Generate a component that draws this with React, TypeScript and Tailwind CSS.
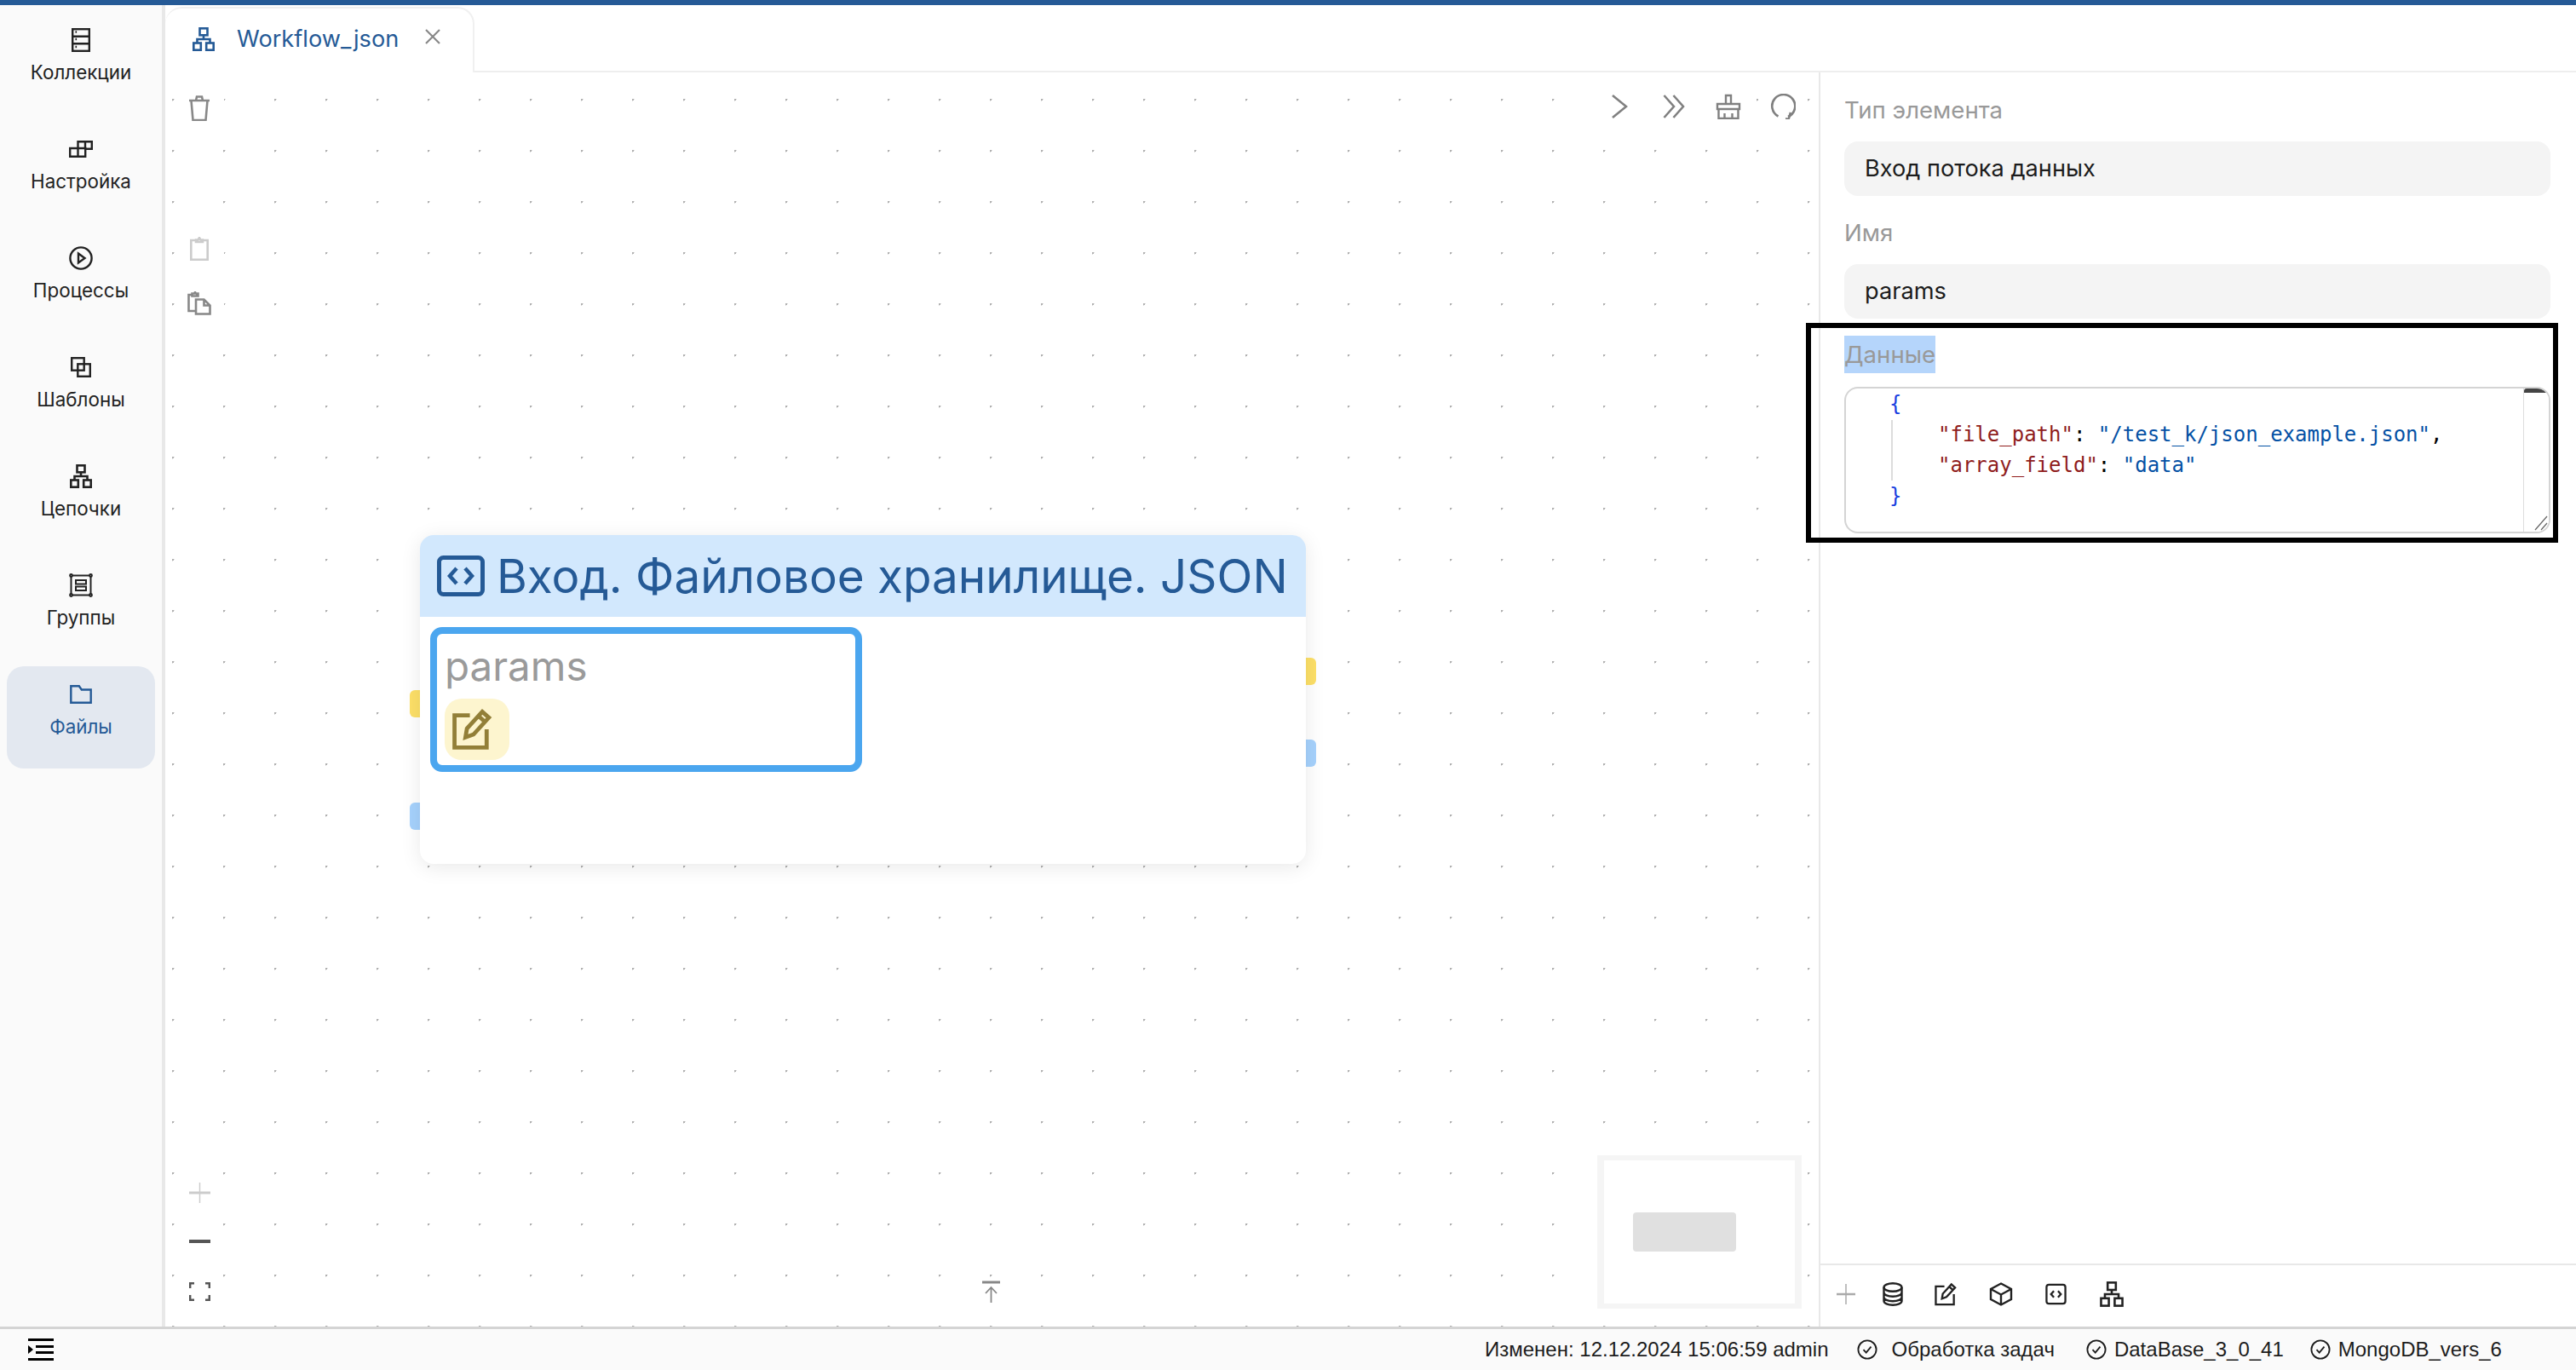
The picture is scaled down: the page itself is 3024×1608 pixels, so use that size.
import type { ReactNode } from "react";

type IconProps = { w: number; h: number; vb: string; sw?: number; className?: string; children: ReactNode };

function Icon({ w, h, vb, sw = 2.4, className = "", children }: IconProps) {
  return (
    <svg width={w} height={h} viewBox={vb} fill="none" stroke="currentColor" strokeWidth={sw} className={`shrink-0 ${className}`}>
      {children}
    </svg>
  );
}

const Hierarchy = ({ w = 26, h = 28, sw = 2.6 }: { w?: number; h?: number; sw?: number }) => (
  <Icon w={w} h={h} vb="0 0 26 28" sw={sw}>
    <rect x="8.5" y="1.3" width="9" height="8" />
    <rect x="1.3" y="18.5" width="8.5" height="8.2" />
    <rect x="16.2" y="18.5" width="8.5" height="8.2" />
    <path d="M13 9.5v4.5M5.5 18.5v-4.5h15v4.5" />
  </Icon>
);

const EditIcon = ({ w, h, sw = 2.6 }: { w: number; h: number; sw?: number }) => (
  <Icon w={w} h={h} vb="0 0 28 28" sw={sw}>
    <path d="M12 4.5H1.5v22h22V14" />
    <path d="M9 19.5l1-6L20.5 2l4.5 4L14.5 17.5z" />
    <path d="M18 5l4.5 4" />
  </Icon>
);

const CodeIcon = ({ w, h, sw = 2.6 }: { w: number; h: number; sw?: number }) => (
  <Icon w={w} h={h} vb="0 0 26 26" sw={sw}>
    <rect x="1.5" y="1.5" width="23" height="23" rx="3" />
    <path d="M10.5 9l-3.5 4 3.5 4M15.5 9l3.5 4-3.5 4" />
  </Icon>
);

const CheckCircle = () => (
  <Icon w={24} h={24} vb="0 0 24 24" sw={1.8}>
    <circle cx="12" cy="12" r="10.6" />
    <path d="M7.5 12.2l3.2 3.4 5.8-7" />
  </Icon>
);

const navItems: { label: string; active?: boolean; icon: ReactNode }[] = [
  {
    label: "Коллекции",
    icon: (
      <Icon w={22} h={28} vb="0 0 22 28">
        <rect x="1.2" y="1.2" width="19.6" height="25.6" />
        <path d="M1.2 9.8h19.6M1.2 18.2h19.6" />
        <path d="M4.5 4.5h1.6M4.5 13h1.6M4.5 22h1.6" />
      </Icon>
    ),
  },
  {
    label: "Настройка",
    icon: (
      <Icon w={28} h={20} vb="0 0 28 20">
        <path d="M1.2 9h18v9.8h-18zM10.5 9v9.8" />
        <path d="M10.5 9V1.2h16.3v8.6h-7.6M19 1.2v8" />
      </Icon>
    ),
  },
  {
    label: "Процессы",
    icon: (
      <Icon w={28} h={28} vb="0 0 28 28">
        <circle cx="14" cy="14" r="12.6" />
        <path d="M11 8.5l7.5 5.5-7.5 5.5z" />
      </Icon>
    ),
  },
  {
    label: "Шаблоны",
    icon: (
      <Icon w={24} h={24} vb="0 0 24 24">
        <rect x="1.2" y="1.2" width="14.5" height="14.5" />
        <rect x="8.3" y="8.3" width="14.5" height="14.5" />
      </Icon>
    ),
  },
  { label: "Цепочки", icon: <Hierarchy /> },
  {
    label: "Группы",
    icon: (
      <Icon w={28} h={28} vb="0 0 28 28" sw={2}>
        <rect x="2.5" y="2.5" width="23" height="23" />
        <rect x="8" y="8" width="12" height="4.5" />
        <rect x="8" y="15.5" width="12" height="4.5" />
        <circle cx="2.5" cy="2.5" r="1.4" fill="#fafafa" />
        <circle cx="25.5" cy="2.5" r="1.4" fill="#fafafa" />
        <circle cx="2.5" cy="25.5" r="1.4" fill="#fafafa" />
        <circle cx="25.5" cy="25.5" r="1.4" fill="#fafafa" />
      </Icon>
    ),
  },
  {
    label: "Файлы",
    active: true,
    icon: (
      <Icon w={26} h={22} vb="0 0 26 22">
        <path d="M1.3 20.7V1.3h9.5l3 4.2h10.9v15.2z" />
      </Icon>
    ),
  },
];

function Sidebar() {
  return (
    <aside className="w-[194px] shrink-0 bg-[#fafafa] border-r-4 border-[#e8e8e8] pt-2 pl-2 flex flex-col gap-2">
      {navItems.map((item) => (
        <div
          key={item.label}
          className={`w-[174px] h-[120px] rounded-[20px] flex flex-col items-center ${item.active ? "bg-[#e3e8f0] text-[#255a96]" : "text-[#222222]"}`}
        >
          <div className="h-[28px] mt-[19px] flex items-center justify-center">{item.icon}</div>
          <span className="mt-[10px] text-[22.4px] leading-[28px]">{item.label}</span>
        </div>
      ))}
    </aside>
  );
}

function TabBar() {
  return (
    <div className="h-[79px] shrink-0 flex">
      <div className="w-[363px] mt-[2px] rounded-tr-[20px] rounded-tl-[20px] border-r-2 border-t-2 border-[#f0f0f0] flex items-center pb-[2px]">
        <div className="ml-[32px] text-[#255a96] mb-[2px]">
          <Hierarchy />
        </div>
        <span className="ml-[26px] text-[27.2px] text-[#255a96]">Workflow_json</span>
        <svg width="18" height="18" viewBox="0 0 18 18" stroke="#888888" strokeWidth="2.2" className="ml-[31px] mb-[8px]">
          <path d="M1 1l16 16M17 1L1 17" />
        </svg>
      </div>
      <div className="flex-1 border-b-2 border-[#eeeeee]" />
    </div>
  );
}

function ToolButton({ children, className = "" }: { children: ReactNode; className?: string }) {
  return <div className={`w-[58px] h-[58px] bg-white flex items-center justify-center ${className}`}>{children}</div>;
}

function GraphNode() {
  return (
    <div className="absolute left-[291px] top-[543px] w-[1040px] h-[386px]">
      <div className="absolute left-[-12px] top-[182px] w-[12px] h-[32px] rounded-l-[6px] bg-[#fde068]" />
      <div className="absolute left-[-12px] top-[314px] w-[12px] h-[32px] rounded-l-[6px] bg-[#a6d2fd]" />
      <div className="absolute right-[-12px] top-[144px] w-[12px] h-[32px] rounded-r-[6px] bg-[#fde068]" />
      <div className="absolute right-[-12px] top-[240px] w-[12px] h-[32px] rounded-r-[6px] bg-[#a6d2fd]" />
      <div className="relative h-full rounded-[16px] bg-white shadow-[0_4px_24px_rgba(0,0,0,0.09)] overflow-hidden">
        <div className="h-[96px] bg-[#d2e8fd] flex items-center pl-[20px] text-[#255a96]">
          <svg width="56" height="48" viewBox="0 0 56 48" fill="none" stroke="currentColor" strokeWidth="5" className="shrink-0">
            <rect x="2.5" y="2.5" width="51" height="43" rx="5" />
            <path d="M23 15l-8 9 8 9M33 15l8 9-8 9" strokeWidth="4.5" />
          </svg>
          <span className="ml-[14px] text-[54.8px] leading-[64px] whitespace-nowrap">Вход. Файловое хранилище. JSON</span>
        </div>
        <div className="mt-[12px] ml-[12px] w-[507px] h-[170px] rounded-[14px] border-[8px] border-[#4ba6ef] pl-[9px] flex flex-col">
          <span className="mt-[8px] text-[47.5px] leading-[60px] text-[#9a9a9a]">params</span>
          <div className="mt-[8px] w-[76px] h-[72px] rounded-[20px] bg-[#fdf5cf] text-[#927f38] flex items-center pl-[8px]">
            <EditIcon w={50} h={48} sw={2.8} />
          </div>
        </div>
      </div>
    </div>
  );
}

function Canvas() {
  return (
    <div className="relative flex-1 ml-2 bg-[radial-gradient(circle_at_0_0,#b0b0b0_2.2px,transparent_2.8px)] bg-[length:60px_60px] bg-[position:0_31px]">
      {/* левая панель */}
      <div className="absolute left-[3px] top-[13px] flex flex-col text-[#888888]">
        <ToolButton>
          <Icon w={26} h={30} vb="0 0 26 30" sw={2.6}>
            <path d="M1 6h24M3.5 6l2 23h15l2-23M9 6l1-4.5h6L17 6" />
          </Icon>
        </ToolButton>
        <ToolButton className="mt-[107px] text-[#cccccc]">
          <Icon w={22} h={28} vb="0 0 22 28" sw={2.6}>
            <path d="M7 4H1.3v22.7h19.4V4H15" />
            <path d="M7 6V3.5h2.5L11 1l1.5 2.5H15V6z" />
          </Icon>
        </ToolButton>
        <ToolButton className="mt-[6px]">
          <Icon w={28} h={28} vb="0 0 28 28" sw={2.6}>
            <path d="M9 23H1.5V4h4M10 4h3" />
            <path d="M5.5 5.5V2.5H8L9 1l1 1.5h2.5v3z" />
            <path d="M10 9.5h9.5l7 7v10H10zM19.5 9.5v7h7" />
          </Icon>
        </ToolButton>
      </div>

      {/* запуск */}
      <div className="absolute right-[13px] top-[11px] flex gap-[6px] text-[#808080]">
        <ToolButton>
          <Icon w={20} h={28} vb="0 0 20 28" sw={2.6}>
            <path d="M2 1l16 13L2 27" />
          </Icon>
        </ToolButton>
        <ToolButton>
          <Icon w={26} h={28} vb="0 0 26 28" sw={2.6}>
            <path d="M1.5 1l11.5 13L1.5 27M12.5 1L24 14 12.5 27" />
          </Icon>
        </ToolButton>
        <ToolButton>
          <Icon w={30} h={30} vb="0 0 30 30" sw={2.4}>
            <path d="M12 12V2h6v10M2 12h26v6H2zM3.5 18v11h23V18M10.5 29v-6M19.5 29v-6" />
          </Icon>
        </ToolButton>
        <ToolButton>
          <Icon w={30} h={30} vb="0 0 30 30" sw={2.6}>
            <path d="M9.5 26.5A13.5 13.5 0 1 1 21 27" />
            <path d="M18 29.5l3.8-.2L24 22" />
          </Icon>
        </ToolButton>
      </div>

      <GraphNode />

      {/* масштаб */}
      <div className="absolute left-[20px] top-[1303px] flex flex-col items-center w-[25px]">
        <svg width="25" height="24" viewBox="0 0 25 24" stroke="#cccccc">
          <path d="M12.5 0v24" strokeWidth="1.5" />
          <path d="M0 12h25" strokeWidth="3" />
        </svg>
        <div className="mt-[43px] w-[25px] h-[4px] bg-[#555555]" />
        <svg width="25" height="22" viewBox="0 0 25 22" fill="none" stroke="#555555" strokeWidth="2.4" className="mt-[46px]">
          <path d="M1.2 7V1.2H6M19 1.2h4.8V7M1.2 15v5.8H6M19 20.8h4.8V15" />
        </svg>
      </div>

      <svg width="21" height="26" viewBox="0 0 21 26" fill="none" stroke="#888888" className="absolute left-[951px] top-[1418px]">
        <path d="M0 2h21" strokeWidth="3" />
        <path d="M10.5 26V8M4 15l6.5-7L17 15" strokeWidth="1.8" />
      </svg>

      {/* миникарта */}
      <div className="absolute left-[1673px] top-[1271px] w-[240px] h-[180px] border-x-[8px] border-y-[6px] border-[#f5f5f5] bg-white">
        <div className="ml-[34px] mt-[61px] w-[121px] h-[46px] rounded-[4px] bg-[#e0e0e0]" />
      </div>
    </div>
  );
}

function Field({ value }: { value: string }) {
  return (
    <div className="mt-[17px] h-[64px] rounded-[16px] bg-[#f4f4f4] flex items-center pl-[24px] pt-[1px] text-[27.2px] text-[#1c1c1c]">
      {value}
    </div>
  );
}

function JsonEditor() {
  return (
    <div className="relative mt-[16px] h-[172px] rounded-[16px] border-2 border-[#d4d4d4] bg-white overflow-hidden font-['DejaVu_Sans_Mono',monospace] text-[24px] leading-[36px] whitespace-pre">
      <div className="absolute left-[53px] top-[37px] w-[2px] h-[71px] bg-[#dcdcdc]" />
      <div className="pl-[51px]">
        <div className="text-[#1a3fe0]">{"{"}</div>
        <div className="pl-[57px]">
          <span className="text-[#8f1d1d]">"file_path"</span>
          <span>: </span>
          <span className="text-[#0451a5]">"/test_k/json_example.json"</span>
          <span>,</span>
        </div>
        <div className="pl-[57px]">
          <span className="text-[#8f1d1d]">"array_field"</span>
          <span>: </span>
          <span className="text-[#0451a5]">"data"</span>
        </div>
        <div className="text-[#1a3fe0]">{"}"}</div>
      </div>
      {/* скроллбар */}
      <div className="absolute right-0 top-0 bottom-0 w-[30px] border-l border-[#dddddd] bg-white">
        <div className="h-[5px] bg-[#444444] rounded-t-[3px]" />
      </div>
      <svg width="16" height="18" viewBox="0 0 16 18" stroke="#666666" strokeWidth="1.2" className="absolute right-[1px] bottom-[1px]">
        <path d="M1 17L15 1M8 17l7-8" />
      </svg>
    </div>
  );
}

function PropertiesPanel() {
  return (
    <div className="relative w-[889px] shrink-0 border-l-2 border-[#e8e8e8] flex flex-col">
      <div className="flex-1 pt-[24px] pl-[28px] pr-[30px]">
        <div className="h-[40px] leading-[40px] text-[27.6px] text-[#999999]">Тип элемента</div>
        <Field value="Вход потока данных" />
        <div className="mt-[23px] h-[40px] leading-[40px] text-[27.6px] text-[#999999]">Имя</div>
        <Field value="params" />
        <div className="mt-[20px] h-[44px] leading-[44px] text-[27.6px] text-[#999999]">
          <span className="inline-block h-[44px] bg-[#b5d5fb]">Данные</span>
        </div>
        <JsonEditor />
      </div>

      {/* рамка-аннотация */}
      <div className="absolute left-[-17px] top-[294px] w-[883px] h-[258px] border-[6px] border-black pointer-events-none" />

      <div className="h-[74px] shrink-0 border-t-2 border-[#e8e8e8] flex items-center pl-[19px] pb-[4px] text-[#222222]">
        <svg width="22" height="24" viewBox="0 0 22 24" stroke="#aaaaaa">
          <path d="M11 0v24" strokeWidth="1.5" />
          <path d="M0 12h22" strokeWidth="2.5" />
        </svg>
        <div className="ml-[32px]">
          <Icon w={24} h={28} vb="0 0 24 28" sw={2.4}>
            <ellipse cx="12" cy="6" rx="10.5" ry="4.8" />
            <path d="M1.5 6v16c0 2.7 4.7 4.8 10.5 4.8s10.5-2.1 10.5-4.8V6M1.5 12c0 2.7 4.7 4.8 10.5 4.8S22.5 14.7 22.5 12M1.5 17.5c0 2.7 4.7 4.8 10.5 4.8s10.5-2.1 10.5-4.8" />
          </Icon>
        </div>
        <div className="ml-[37px]">
          <EditIcon w={27} h={28} sw={2.4} />
        </div>
        <div className="ml-[37px]">
          <Icon w={28} h={28} vb="0 0 28 28" sw={2.4}>
            <path d="M14 1.5l12 6.5v12l-12 6.5L2 20V8z" />
            <path d="M2 8l12 6.5L26 8M14 14.5v12" />
          </Icon>
        </div>
        <div className="ml-[38px]">
          <CodeIcon w={25} h={26} sw={2.4} />
        </div>
        <div className="ml-[38px]">
          <Hierarchy w={30} h={30} sw={2.4} />
        </div>
      </div>
    </div>
  );
}

function StatusBar() {
  return (
    <footer className="h-[51px] shrink-0 bg-[#fafafa] border-t-[3px] border-[#d4d4d4] flex items-center font-['Liberation_Sans',sans-serif] text-[24px] text-[#1c1c1c]">
      <svg width="30" height="26" viewBox="0 0 30 26" fill="#000000" className="ml-[33px]">
        <path d="M0 0h30v3H0zM0 23h30v3H0zM9 8h21v3H9zM9 15h21v3H9zM0 8l6 5-6 5z" />
      </svg>
      <span className="ml-[1680px]">Изменен: 12.12.2024 15:06:59 admin</span>
      <span className="ml-[33px] flex items-center">
        <CheckCircle />
      </span>
      <span className="ml-[17px]">Обработка задач</span>
      <span className="ml-[37px] flex items-center">
        <CheckCircle />
      </span>
      <span className="ml-[9px]">DataBase_3_0_41</span>
      <span className="ml-[31px] flex items-center">
        <CheckCircle />
      </span>
      <span className="ml-[9px]">MongoDB_vers_6</span>
    </footer>
  );
}

export default function App() {
  return (
    <div className="w-[3024px] h-[1608px] flex flex-col overflow-hidden bg-white font-['Inter',sans-serif]">
      <div className="h-[6px] shrink-0 bg-[#255a96]" />
      <div className="flex-1 min-h-0 flex">
        <Sidebar />
        <div className="flex-1 min-w-0 flex flex-col">
          <TabBar />
          <div className="flex-1 min-h-0 flex">
            <Canvas />
            <PropertiesPanel />
          </div>
        </div>
      </div>
      <StatusBar />
    </div>
  );
}
